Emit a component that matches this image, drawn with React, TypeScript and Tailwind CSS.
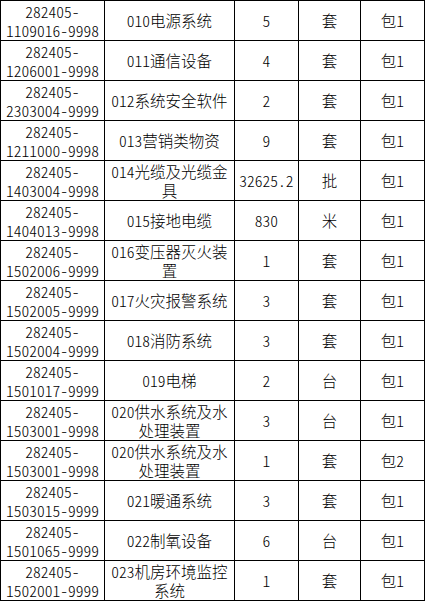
const rows = [
  ['282405-\n1109016-9998', '010电源系统', '5', '套', '包1'],
  ['282405-\n1206001-9998', '011通信设备', '4', '套', '包1'],
  ['282405-\n2303004-9999', '012系统安全软件', '2', '套', '包1'],
  ['282405-\n1211000-9998', '013营销类物资', '9', '套', '包1'],
  ['282405-\n1403004-9998', '014光缆及光缆金\n具', '32625.2', '批', '包1'],
  ['282405-\n1404013-9998', '015接地电缆', '830', '米', '包1'],
  ['282405-\n1502006-9999', '016变压器灭火装\n置', '1', '套', '包1'],
  ['282405-\n1502005-9999', '017火灾报警系统', '3', '套', '包1'],
  ['282405-\n1502004-9999', '018消防系统', '3', '套', '包1'],
  ['282405-\n1501017-9999', '019电梯', '2', '台', '包1'],
  ['282405-\n1503001-9998', '020供水系统及水\n处理装置', '3', '台', '包1'],
  ['282405-\n1503001-9998', '020供水系统及水\n处理装置', '1', '套', '包2'],
  ['282405-\n1503015-9999', '021暖通系统', '3', '套', '包1'],
  ['282405-\n1501065-9999', '022制氧设备', '6', '台', '包1'],
  ['282405-\n1502001-9999', '023机房环境监控\n系统', '1', '套', '包1'],
];

export default function App() {
  return (
    <div className="bg-white w-[425px] h-[601px]">
      <div className="grid grid-cols-[104px_130px_64px_62px_64px] w-[425px] border-r border-b border-black text-black text-[15.5px] leading-[19px] font-light font-['Noto_Sans_CJK_SC',sans-serif] [font-feature-settings:'hwid']">
        {rows.map((row, i) =>
          row.map((cell, j) => (
            <div
              key={`${i}-${j}`}
              className="h-10 border-l border-t border-black flex items-center justify-center text-center whitespace-pre-line overflow-hidden"
            >
              {cell}
            </div>
          ))
        )}
      </div>
    </div>
  );
}
